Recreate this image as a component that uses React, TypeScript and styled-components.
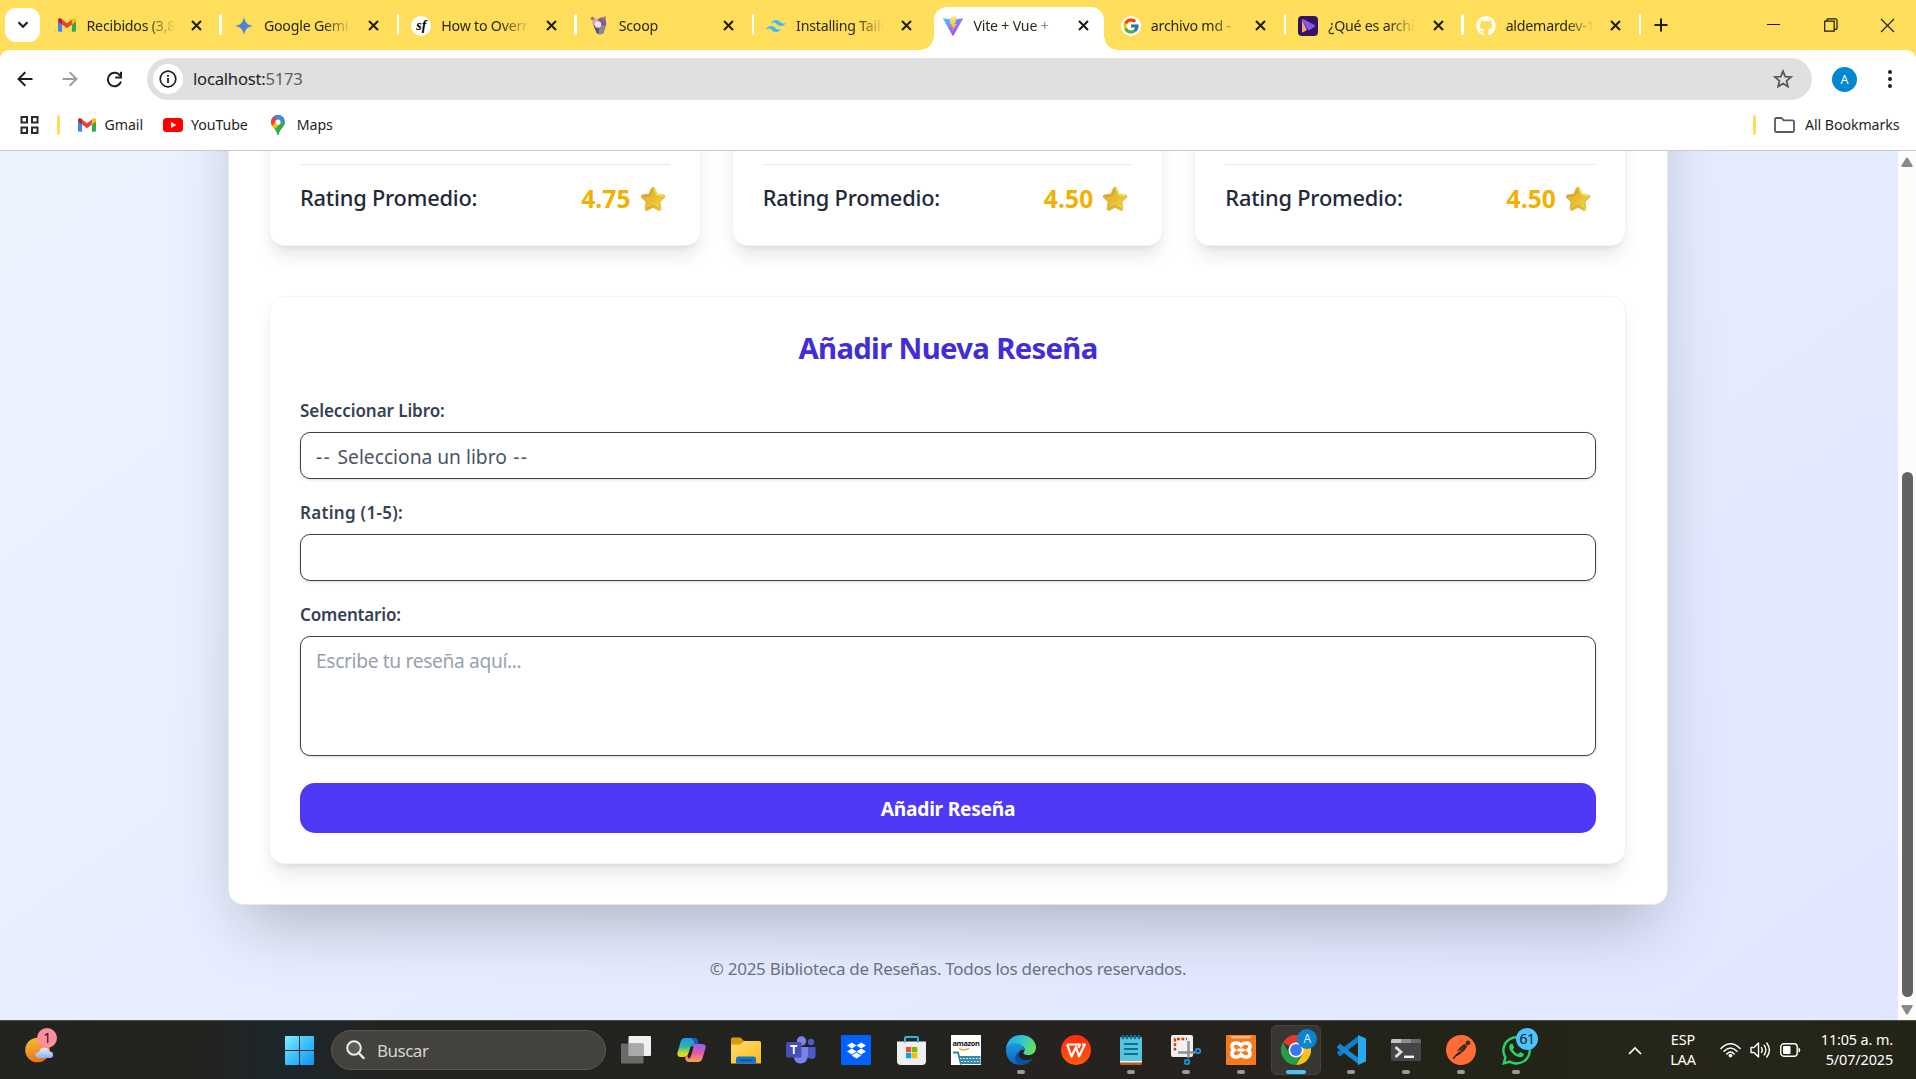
import React from "react";
import styled, { createGlobalStyle, css } from "styled-components";
import { FaGithub, FaWhatsapp, FaDropbox } from "react-icons/fa";
import { FcGoogle } from "react-icons/fc";
import { SiPostman, SiTailwindcss } from "react-icons/si";

const GlobalStyle = createGlobalStyle`
  *, *::before, *::after { box-sizing: border-box; }
  html, body { margin: 0; padding: 0; overflow: hidden; }
  body { font-family: "Noto Sans", "Open Sans", sans-serif; color: #1f1f1f; }
  svg { display: block; flex: none; }
`;

const Screen = styled.div`
  width: 1916px;
  height: 1079px;
  display: flex;
  flex-direction: column;
  overflow: hidden;
  background: #ffde5c;
`;

/* ---------- Tab strip ---------- */

const TabStrip = styled.div`
  height: 50px;
  flex: none;
  display: flex;
  align-items: flex-start;
  background: #ffde5c;
`;

const TabSearch = styled.div`
  width: 35px;
  height: 34px;
  margin: 8px 3.5px 0 5px;
  border-radius: 11px;
  background: #fff;
  display: flex;
  align-items: center;
  justify-content: center;
`;

const TabCell = styled.div<{ $active?: boolean; $divided?: boolean }>`
  position: relative;
  width: 177.4px;
  height: 50px;
  flex: none;
  padding: 0 16px 0 13px;
  display: flex;
  align-items: center;
  ${(p) =>
    p.$divided &&
    css`
      &::after {
        content: "";
        position: absolute;
        right: -1px;
        top: 14px;
        width: 2.5px;
        height: 21px;
        border-radius: 2px;
        background: #fff;
      }
    `}
  ${(p) =>
    p.$active &&
    css`
      &::before {
        content: "";
        position: absolute;
        z-index: 0;
        left: 4px;
        right: 4px;
        top: 7px;
        bottom: 0;
        border-radius: 13px 13px 0 0;
        background: #fff;
      }
    `}
`;

const TabFoot = styled.i<{ $side: "left" | "right" }>`
  position: absolute;
  bottom: 0;
  ${(p) => p.$side}: -10px;
  width: 14px;
  height: 14px;
  background: radial-gradient(
    circle at ${(p) => (p.$side === "left" ? "0 0" : "100% 0")},
    transparent 13.5px,
    #fff 14px
  );
`;

const Favicon = styled.span`
  position: relative;
  z-index: 1;
  width: 20px;
  height: 20px;
  margin-top: 1px;
  display: flex;
  align-items: center;
  justify-content: center;
`;

const FaviconDisc = styled.span`
  width: 20px;
  height: 20px;
  border-radius: 50%;
  background: #fff;
  display: flex;
  align-items: center;
  justify-content: center;
  font: italic 700 14px/20px "Liberation Serif", serif;
  color: #000;
`;

const TabTitle = styled.span`
  position: relative;
  z-index: 1;
  width: 91px;
  margin-left: 10px;
  padding-top: 1px;
  overflow: hidden;
  white-space: nowrap;
  font-size: 14.2px;
  line-height: 22px;
  letter-spacing: -0.22px;
  color: #2b2717;
  mask-image: linear-gradient(90deg, #000 66%, transparent 97%);
`;

const TabClose = styled.span`
  position: relative;
  z-index: 1;
  margin-left: 12px;
  width: 14px;
  display: flex;
  justify-content: center;
`;

const NewTab = styled.div`
  width: 42px;
  height: 50px;
  display: flex;
  align-items: center;
  justify-content: center;
`;

const WindowButtons = styled.div`
  margin-left: auto;
  height: 50px;
  display: flex;
`;

const WindowButton = styled.div`
  width: 57px;
  display: flex;
  align-items: center;
  justify-content: center;
`;

/* ---------- Toolbar and bookmarks ---------- */

const Chrome = styled.div`
  height: 101px;
  flex: none;
  display: flex;
  flex-direction: column;
  background: #fff;
  border-bottom: 1px solid #c9c9c9;
  border-radius: 9px 9px 0 0;
`;

const Toolbar = styled.div`
  height: 58px;
  display: flex;
  align-items: center;
`;

const NavButton = styled.div`
  width: 45px;
  display: flex;
  justify-content: center;
`;

const NavGroup = styled.div`
  display: flex;
  width: 147px;
  padding-left: 2px;
`;

const Omnibox = styled.div`
  width: 1665px;
  height: 42px;
  border-radius: 21px;
  background: #e0e0e0;
  display: flex;
  align-items: center;
  padding: 0 19.5px 0 6px;
`;

const InfoDisc = styled.div`
  width: 30px;
  height: 30px;
  border-radius: 50%;
  background: #fff;
  display: flex;
  align-items: center;
  justify-content: center;
`;

const Url = styled.div`
  flex: 1;
  margin-left: 10px;
  font-size: 16.7px;
  line-height: 24px;
  letter-spacing: -0.25px;
  color: #1f1f1f;
  span { color: #5f5f5f; }
`;

const Avatar = styled.div`
  width: 25px;
  height: 25px;
  margin: 0 25px 0 20px;
  border-radius: 50%;
  background: #0288d1;
  color: #fff;
  font-size: 12.5px;
  line-height: 25px;
  text-align: center;
`;

const Bookmarks = styled.div`
  height: 42px;
  display: flex;
  align-items: center;
  padding: 0 16.5px 8px 20px;
`;

const BookmarkRule = styled.div`
  width: 3px;
  height: 20px;
  margin: 0 18px;
  border-radius: 2px;
  background: #ffde5c;
`;

const Bookmark = styled.div<{ $gap: number; $after: number }>`
  display: flex;
  align-items: center;
  gap: ${(p) => p.$gap}px;
  margin-right: ${(p) => p.$after}px;
  font-size: 14.2px;
  line-height: 20px;
  letter-spacing: -0.08px;
  white-space: nowrap;
`;

const Spacer = styled.div`
  flex: 1;
`;

/* ---------- Page ---------- */

const Viewport = styled.div`
  height: 869px;
  flex: none;
  display: flex;
  overflow: hidden;
`;

const Page = styled.main`
  width: 1898px;
  height: 869px;
  overflow: hidden;
  display: flex;
  flex-direction: column;
  background: linear-gradient(to bottom right, #eff6ff, #e0e7ff) 0 100% / 100% 1388px no-repeat;
`;

const Sheet = styled.section`
  width: 1440px;
  height: 954px;
  flex: none;
  margin: -200px 0 0 228px;
  padding: 40px 41px 40px 40px;
  border: 1px solid #e5e7eb;
  border-radius: 15px;
  background: #fff;
  box-shadow: 0 31px 62px -15px rgba(0, 0, 0, 0.25);
`;

const cardShadow = css`
  border: 1px solid #f3f4f6;
  border-radius: 15px;
  background: #fff;
  box-shadow: 0 12.5px 19px -4px rgba(0, 0, 0, 0.1), 0 5px 7.5px -5px rgba(0, 0, 0, 0.1);
`;

const CardGrid = styled.div`
  display: grid;
  grid-template-columns: repeat(3, 1fr);
  gap: 31px;
`;

const BookCard = styled.article`
  ${cardShadow}
  height: 254px;
  padding: 0 30px 30px 30px;
  display: flex;
  flex-direction: column;
  justify-content: flex-end;
`;

const RatingRow = styled.div`
  height: 51px;
  border-top: 1px solid #e5e7eb;
  padding-top: 20px;
  display: flex;
  align-items: center;
  justify-content: space-between;
`;

const RatingLabel = styled.span`
  padding-bottom: 4px;
  font-size: 21.8px;
  line-height: 30px;
  font-weight: 500;
  letter-spacing: -0.2px;
  color: #1e2939;
`;

const RatingValue = styled.span`
  padding: 0 4px 2px 0;
  display: flex;
  align-items: center;
  gap: 9px;
  font-size: 24.6px;
  line-height: 30px;
  font-weight: 700;
  letter-spacing: 0.1px;
  color: #f0b100;
`;

const FormCard = styled.section`
  ${cardShadow}
  height: 568px;
  margin-top: 50px;
  padding: 30px 29px 30px 30px;
  display: flex;
  flex-direction: column;
`;

const FormTitle = styled.h2`
  margin: 0;
  height: 71px;
  padding-top: 2px;
  text-align: center;
  font-size: 29.3px;
  line-height: 38px;
  font-weight: 700;
  letter-spacing: -0.68px;
  color: #432dd7;
`;

const Field = styled.label`
  display: flex;
  flex-direction: column;
  margin-bottom: 20px;
`;

const FieldLabel = styled.span<{ $track: number }>`
  height: 35px;
  padding-top: 1px;
  font-size: 17px;
  line-height: 26px;
  font-weight: 600;
  letter-spacing: ${(p) => p.$track}px;
  color: #364153;
`;

const Control = styled.span<{ $tall?: boolean; $muted?: boolean }>`
  height: ${(p) => (p.$tall ? 120 : 47)}px;
  padding: 9px 15px;
  border: 1px solid #364153;
  border-radius: 10px;
  background: #fff;
  box-shadow: 0 1px 3px rgba(0, 0, 0, 0.14);
  font-size: 19.2px;
  line-height: 30px;
  letter-spacing: ${(p) => (p.$muted ? -0.35 : 0)}px;
  color: ${(p) => (p.$muted ? "#99a1af" : "#4a5565")};
`;

const Dashes = styled.span`
  letter-spacing: 1.4px;
`;

const Submit = styled.button`
  height: 50px;
  margin-top: 7px;
  padding: 1px 0 0;
  border: 0;
  border-radius: 15px;
  background: #4f39f6;
  color: #fff;
  font: 700 19.2px/30px "Noto Sans", "Open Sans", sans-serif;
  letter-spacing: -0.27px;
`;

const PageFooter = styled.footer`
  padding: 51px 2px 0 0;
  text-align: center;
  font-size: 17px;
  line-height: 26px;
  letter-spacing: -0.29px;
  color: #6a7282;
`;

const Scrollbar = styled.div`
  width: 18px;
  height: 869px;
  padding: 6px 0 5px;
  background: #fcfcfc;
  display: flex;
  flex-direction: column;
  align-items: center;
`;

const Thumb = styled.div`
  width: 11px;
  height: 525px;
  margin: auto 0 8px;
  border-radius: 6px;
  background: #636363;
`;

/* ---------- Taskbar ---------- */

const Taskbar = styled.div`
  height: 59px;
  flex: none;
  display: flex;
  align-items: center;
  border-top: 1px solid #4b4e49;
  background: linear-gradient(
    90deg, #22241f 0%, #23231f 10%, #1c262b 15%, #1f2526 17%, #23221f 21%,
    #22231f 45%, #26221f 56%, #25221d 66%, #222417 76%, #262519 88%, #232517 100%
  );
  color: #fff;
`;

const Weather = styled.div`
  position: relative;
  width: 36px;
  height: 40px;
  margin: 0 224px 0 24px;
`;

const CountBadge = styled.span<{ $x: number; $y: number; $size: number; $bg: string; $fg: string; $font: number }>`
  position: absolute;
  left: ${(p) => p.$x}px;
  top: ${(p) => p.$y}px;
  width: ${(p) => p.$size}px;
  height: ${(p) => p.$size}px;
  border-radius: 50%;
  background: ${(p) => p.$bg};
  color: ${(p) => p.$fg};
  font-size: ${(p) => p.$font}px;
  line-height: ${(p) => p.$size - 1}px;
  letter-spacing: -0.5px;
  text-align: center;
`;

const SearchPill = styled.div`
  width: 275px;
  height: 40px;
  margin: 0 2.5px 0 16px;
  padding: 0 14px;
  border: 1px solid #595856;
  border-radius: 20px;
  background: #43423f;
  display: flex;
  align-items: center;
  gap: 12px;
  font-size: 17px;
  letter-spacing: -0.5px;
  color: #d4d4d2;
`;

const StartButton = styled.div`
  width: 31px;
  display: flex;
  justify-content: center;
`;

const TaskCell = styled.div<{ $focused?: boolean }>`
  position: relative;
  width: 50px;
  height: 50px;
  margin: 0 2.5px;
  flex: none;
  display: flex;
  align-items: center;
  justify-content: center;
  border-radius: 6px;
  ${(p) =>
    p.$focused &&
    css`
      background: #373633;
      border: 1px solid #454340;
    `}
`;

const RunMark = styled.i<{ $focused?: boolean }>`
  position: absolute;
  bottom: ${(p) => (p.$focused ? 0 : 1)}px;
  left: 50%;
  width: ${(p) => (p.$focused ? 20 : 8)}px;
  height: 4px;
  transform: translateX(-50%);
  border-radius: 2px;
  background: ${(p) => (p.$focused ? "#4cc2ff" : "#9a9a98")};
`;

const AppTile = styled.span<{ $bg: string; $round?: boolean }>`
  width: 30px;
  height: 30px;
  border-radius: ${(p) => (p.$round ? "50%" : "1px")};
  background: ${(p) => p.$bg};
  display: flex;
  align-items: center;
  justify-content: center;
`;

const AmazonTile = styled.span`
  width: 30px;
  height: 30px;
  background: #fff;
  display: flex;
  flex-direction: column;
  align-items: center;
  font: 700 7.4px/9px "Open Sans", sans-serif;
  letter-spacing: -0.35px;
  color: #111;
  padding-top: 4px;
`;

const Tray = styled.div`
  margin-left: auto;
  display: flex;
  align-items: center;
  padding-right: 23px;
`;

const TrayText = styled.div<{ $align: string; $width: number; $left: number; $track: number }>`
  width: ${(p) => p.$width}px;
  margin-left: ${(p) => p.$left}px;
  text-align: ${(p) => p.$align};
  font-size: 14.4px;
  line-height: 20px;
  letter-spacing: ${(p) => p.$track}px;
  white-space: nowrap;
`;

const TrayIcons = styled.div`
  margin-left: 22px;
  display: flex;
  align-items: center;
  gap: 9px;
`;

/* ---------- Drawings ---------- */

const GmailIcon = ({ size = 18 }: { size?: number }) => (
  <svg width={size} height={size * 0.78} viewBox="0 0 24 18">
    <path d="M0 2.6V16.4Q0 18 1.6 18H5.5V8.2z" fill="#4285f4" />
    <path d="M18.5 18H22.4Q24 18 24 16.4V2.6L18.5 8.2z" fill="#34a853" />
    <path d="M18.5 1.6V8.4L24 4.3V2.4C24 .1 21.4-.7 19.8.6z" fill="#fbbc04" />
    <path d="M5.5 8.4V1.6L12 6.5l6.5-4.9v6.8L12 13.2z" fill="#ea4335" />
    <path d="M0 2.4v1.9l5.5 4.1V1.6L4.2.6C2.6-.7 0 .1 0 2.4z" fill="#c5221f" />
  </svg>
);

const GeminiIcon = () => (
  <svg width="18" height="20" viewBox="0 0 20 20">
    <defs>
      <linearGradient id="gem" x1="0" y1="0" x2="1" y2="0">
        <stop offset="0" stopColor="#4a8fd8" />
        <stop offset=".5" stopColor="#4f7fd6" />
        <stop offset="1" stopColor="#28a0f0" />
      </linearGradient>
    </defs>
    <path d="M10 0C11 6 14 9 20 10 14 11 11 14 10 20 9 14 6 11 0 10 6 9 9 6 10 0z" fill="url(#gem)" />
  </svg>
);

const ScoopIcon = () => (
  <svg width="18" height="19" viewBox="0 0 18 19">
    <path d="M2.5 7H16.500L13.500 17q-3.500 2.500-7 0z" fill="#5b5867" />
    <path d="M9 9h7l-3 8q-2 1.500-4 1z" fill="#8c8798" />
    <circle cx="6" cy="6" r="3.800" fill="#dba5b4" />
    <circle cx="12" cy="5.500" r="4" fill="#84579f" />
    <circle cx="8" cy="8.500" r="3.200" fill="#eee0e6" />
    <circle cx="2.500" cy="2.500" r="1.800" fill="#a3707a" />
    <path d="M12 2l3-2 1 2-2 3z" fill="#a77a5a" />
  </svg>
);

const ViteIcon = () => (
  <svg width="20" height="20" viewBox="0 0 20 20">
    <defs>
      <linearGradient id="vt" x1="0" y1="0" x2=".7" y2="1">
        <stop offset="0" stopColor="#41d1ff" />
        <stop offset="1" stopColor="#bd34fe" />
      </linearGradient>
      <linearGradient id="vb" x1="0" y1="0" x2="0" y2="1">
        <stop offset="0" stopColor="#ffea83" />
        <stop offset="1" stopColor="#ffa800" />
      </linearGradient>
    </defs>
    <path d="M.3 2.200 10 3.800l9.700-1.600q.5.100.2.700L10.400 19.700q-.4.500-.8 0L.1 2.900q-.2-.6.2-.7z" fill="url(#vt)" />
    <path d="M14 .200 7.300 1.500 6.900 8.500l2-.4-.6 3 1.700-.4-1 4.500L14 7.900l-2.200.4L14 .200z" fill="url(#vb)" />
  </svg>
);

const PlayTileIcon = () => (
  <svg width="20" height="20" viewBox="0 0 20 20">
    <rect width="20" height="20" rx="4" fill="#34145f" />
    <path d="M4 4q0-1.500 1.500-.8L16.500 9q1.500 1 0 2l-6 3.500z" fill="#8a55f5" />
    <path d="M4 4v11.500q.2 1.300 1.500.6l3.500-2.200z" fill="#f4a76a" />
  </svg>
);

const CloseIcon = ({ size = 9, stroke = 2, color = "#1f1c10" }: { size?: number; stroke?: number; color?: string }) => (
  <svg width={size + 2} height={size + 2} viewBox={`-1 -1 ${size + 2} ${size + 2}`}>
    <path d={`M0 0L${size} ${size}M${size} 0L0 ${size}`} stroke={color} strokeWidth={stroke} fill="none" />
  </svg>
);

const ArrowIcon = ({ flip, color }: { flip?: boolean; color: string }) => (
  <svg width="16" height="16" viewBox="0 0 16 16" transform={flip ? "scale(-1,1)" : undefined}>
    <path d="M15.500 8H2M8.300 1.200 1.500 8l6.800 6.800" fill="none" stroke={color} strokeWidth="2" />
  </svg>
);

const ReloadIcon = () => (
  <svg width="17" height="17" viewBox="0 0 17 17">
    <path d="M14.300 5A6.700 6.700 0 1 0 15 10.500" fill="none" stroke="#1f1f1f" strokeWidth="2" />
    <path d="M15 .8V6.500H9.300" fill="none" stroke="#1f1f1f" strokeWidth="2" />
  </svg>
);

const InfoIcon = () => (
  <svg width="18" height="18" viewBox="0 0 18 18">
    <circle cx="9" cy="9" r="7.800" fill="none" stroke="#1f1f1f" strokeWidth="1.700" />
    <path d="M9 8v5M9 5v1.800" stroke="#1f1f1f" strokeWidth="1.800" />
  </svg>
);

const StarOutline = () => (
  <svg width="20" height="20" viewBox="0 0 20 20">
    <path d="M10 2.200 12.200 7.600 18 8.100 13.600 11.900 14.900 17.600 10 14.600 5.100 17.600 6.400 11.900 2 8.100 7.800 7.600z" fill="none" stroke="#5a5a5a" strokeWidth="1.800" />
  </svg>
);

const AppsIcon = () => (
  <svg width="19" height="18" viewBox="0 0 19 18">
    <path d="M1.500 1h5.500v5.500H1.500zM12 1h5.500v5.500H12zM1.500 11.500h5.500V17H1.500zM12 11.500h5.500V17H12z" fill="none" stroke="#2b2b2b" strokeWidth="2" />
  </svg>
);

const YouTubeIcon = () => (
  <svg width="20" height="14" viewBox="0 0 20 14">
    <rect width="20" height="14" rx="3.500" fill="#f00" />
    <path d="M8 4v6l5.200-3z" fill="#fff" />
  </svg>
);

const MapsIcon = () => (
  <svg width="14" height="20" viewBox="0 0 14 20">
    <defs>
      <clipPath id="pin">
        <path d="M7 0a7 7 0 0 1 7 7c0 5-5.200 6.500-6.200 12.400q-.8 1.200-1.600 0C5.200 13.500 0 12 0 7a7 7 0 0 1 7-7z" />
      </clipPath>
    </defs>
    <g clipPath="url(#pin)">
      <path d="M0 0h14v20H0z" fill="#34a853" />
      <path d="M0 9 8 5 10 8 3 15 0 13z" fill="#fbbc04" />
      <path d="M0 0h5L7 5 1.500 10.500H0z" fill="#ea4335" />
      <path d="M2.500 1 6.500 5.500 10 8 14 3V0H3z" fill="#4285f4" />
    </g>
    <circle cx="7" cy="7" r="2.600" fill="#fff" />
  </svg>
);

const FolderIcon = () => (
  <svg width="21" height="16" viewBox="0 0 21 16">
    <path d="M1 13.500V2.500Q1 1 2.500 1H7.500L9.700 3.300H18.500Q20 3.300 20 4.800V13.500Q20 15 18.500 15H2.500Q1 15 1 13.500z" fill="none" stroke="#5a5a5a" strokeWidth="1.800" />
  </svg>
);

const GoldStar = () => (
  <svg width="26" height="26" viewBox="0 0 26 26">
    <defs>
      <linearGradient id="gs" x1="0" y1="0" x2="1" y2="1">
        <stop offset="0" stopColor="#d9ac2d" />
        <stop offset=".5" stopColor="#e9bd33" />
        <stop offset="1" stopColor="#f2dc3a" />
      </linearGradient>
    </defs>
    <path
      d="M11.400 2.200Q13 .2 14.600 2.200L17.100 8 23.600 8.900Q25.900 9.800 24.300 11.700L19.900 15.800 20.900 22.800Q20.500 25.200 18.400 24.300L13 21.300 7.600 24.300Q5.300 25 5.100 22.800L6.100 15.800 1.700 11.700Q.1 9.700 2.400 8.900L8.900 8z"
      fill="url(#gs)"
      stroke="#cfa136"
      strokeWidth=".7"
    />
    <path d="M13 3.500 10 9.500 3.500 10.500M19 22.800 13 19.600 7 22.800" fill="none" stroke="#b98a22" strokeWidth="1" opacity=".6" />
    <path d="M14 2.500 17 8.700 23.500 9.700" fill="none" stroke="#f8ec55" strokeWidth="1.200" />
  </svg>
);

const WeatherIcon = () => (
  <svg width="30" height="26" viewBox="0 0 30 26">
    <defs>
      <linearGradient id="sun" x1=".3" y1="0" x2=".6" y2="1">
        <stop offset="0" stopColor="#f5bd2c" />
        <stop offset="1" stopColor="#ef6c1c" />
      </linearGradient>
      <linearGradient id="cld" x1="0" y1="0" x2="0" y2="1">
        <stop offset="0" stopColor="#e4efff" />
        <stop offset="1" stopColor="#8fb2f2" />
      </linearGradient>
    </defs>
    <circle cx="13.500" cy="13" r="12.300" fill="url(#sun)" />
    <path d="M15 21q-3.500 0-3.500-3t3.500-3q1.500-5 6-4.500 4 .5 4.500 4 3.500 0 3.500 3.200t-3 3.300z" fill="url(#cld)" />
  </svg>
);

const WindowsLogo = () => (
  <svg width="29" height="29" viewBox="0 0 29 29">
    <defs>
      <linearGradient id="win" x1="0" y1="0" x2="29" y2="29" gradientUnits="userSpaceOnUse">
        <stop offset="0" stopColor="#7df0ff" />
        <stop offset=".5" stopColor="#3cc0fb" />
        <stop offset="1" stopColor="#0c93f5" />
      </linearGradient>
    </defs>
    <path d="M1 0h13v14H0V1q0-1 1-1zM15 0h13q1 0 1 1v13H15zM0 15h14v14H1q-1 0-1-1zM15 15h14v13q0 1-1 1H15z" fill="url(#win)" />
  </svg>
);

const MagnifierIcon = () => (
  <svg width="19" height="20" viewBox="0 0 19 20">
    <circle cx="8" cy="8" r="6.800" fill="#5c5c5b" stroke="#ececec" strokeWidth="2" />
    <path d="M12.800 13 17.500 18" stroke="#ececec" strokeWidth="2.500" strokeLinecap="round" />
  </svg>
);

const TaskViewIcon = () => (
  <svg width="30" height="28" viewBox="0 0 30 28">
    <rect x="7.500" y="0" width="22.500" height="20" rx="1" fill="#f0f0f0" />
    <rect x="0" y="7.500" width="22.500" height="20" rx="1" fill="#777" opacity=".85" />
    <rect x="7.500" y="7.500" width="15" height="12.500" fill="#aaa" />
  </svg>
);

const CopilotIcon = () => (
  <svg width="29" height="26" viewBox="0 0 29 26">
    <defs>
      <linearGradient id="cpa" x1="0" y1="0" x2="0" y2="1">
        <stop offset="0" stopColor="#2291f0" />
        <stop offset=".45" stopColor="#28b7a8" />
        <stop offset=".8" stopColor="#d9d92c" />
      </linearGradient>
      <linearGradient id="cpb" x1="0" y1="0" x2="0" y2="1">
        <stop offset="0" stopColor="#8a63f5" />
        <stop offset=".5" stopColor="#e85aa6" />
        <stop offset="1" stopColor="#f9a24b" />
      </linearGradient>
    </defs>
    <path d="M8 1h9q3 0 3.800 3l.8 3h-5q-2 0-3 3l-2.500 8Q10 20 7 20H3.500Q-.5 20 .7 15L3.500 5Q4.500 1 8 1z" fill="url(#cpa)" />
    <path d="M21 25h-9q-3 0-3.600-3l-.4-2q2.300 0 3-2L14 10q1-3 3.500-3h8q4 0 2.800 5l-2.800 9q-1 4-4.500 4z" fill="url(#cpb)" />
    <path d="M15 1h2q3 0 3.800 3l.9 3h-4.200q-1-6-4.500-6z" fill="#1b52c9" />
    <path d="M13.800 9.500h3L14 19q-.6 2-2.600 2.500L10.500 19z" fill="#23231f" />
  </svg>
);

const ExplorerIcon = () => (
  <svg width="30" height="27" viewBox="0 0 30 27">
    <defs>
      <linearGradient id="fld" x1="0" y1="0" x2="1" y2="1">
        <stop offset="0" stopColor="#ffdc6b" />
        <stop offset="1" stopColor="#fbb91f" />
      </linearGradient>
    </defs>
    <path d="M0 2Q0 .5 1.500.5H9.500L12.500 3.500V9H0z" fill="#dd9a0b" />
    <path d="M0 7.500H9L13 4H28.500Q30 4 30 5.500V26.500H0z" fill="url(#fld)" />
    <path d="M5 26.500V22Q5 19.500 7.500 19.500H22.500Q25 19.500 25 22V26.500z" fill="#0f78cc" />
    <path d="M8.500 23.300h13" stroke="#0a4a86" strokeWidth="1.300" />
  </svg>
);

const TeamsIcon = () => (
  <svg width="30" height="28" viewBox="0 0 30 28">
    <circle cx="15.500" cy="5" r="4.700" fill="#7b83eb" />
    <circle cx="25" cy="6" r="3.200" fill="#5059c9" />
    <path d="M20 11h9.500v8.500q0 3-3.500 3.500-3.500 0-6-3z" fill="#5059c9" />
    <path d="M9 11h13v9q-1 7.500-7.500 7.500-5 0-6.500-5z" fill="#7b83eb" />
    <rect x="0" y="6" width="15.500" height="15.500" rx="1.500" fill="#464eb8" />
    <path d="M4.300 10h7M7.800 10v8" stroke="#fff" strokeWidth="1.900" />
  </svg>
);

const StoreIcon = () => (
  <svg width="29" height="29" viewBox="0 0 29 29">
    <path d="M0 5.500H29V25Q29 29 25 29H4Q0 29 0 25z" fill="#efefef" />
    <path d="M8 6.500V2Q8 1 9 1H20Q21 1 21 2V6.500" fill="none" stroke="#28b4e8" strokeWidth="2" />
    <path d="M9 11h5.300v5.300H9z" fill="#f25022" />
    <path d="M15 11h5.300v5.300H15z" fill="#7fba00" />
    <path d="M9 17h5.300v5.300H9z" fill="#00a4ef" />
    <path d="M15 17h5.300v5.300H15z" fill="#ffb900" />
  </svg>
);

const CartIcon = () => (
  <svg width="30" height="17" viewBox="0 0 30 17">
    <path d="M8 .5q5 3 10-.3" fill="none" stroke="#f29a1f" strokeWidth="1.300" />
    <path d="M2 4.500H7L10 16.500" fill="none" stroke="#2b83a8" strokeWidth="1.800" />
    <path d="M8 8H29.500V16H10z" fill="#3787ab" />
    <path d="M9 10.500H29M10 13.500H29" stroke="#fff" strokeWidth="1.100" strokeDasharray="1.600 1.600" />
  </svg>
);

const EdgeIcon = () => (
  <svg width="30" height="30" viewBox="0 0 30 30">
    <defs>
      <linearGradient id="eg1" x1="0" y1=".2" x2="1" y2=".5">
        <stop offset="0" stopColor="#22a5e8" />
        <stop offset=".5" stopColor="#33c5d3" />
        <stop offset="1" stopColor="#67e05c" />
      </linearGradient>
      <linearGradient id="eg2" x1="0" y1="0" x2="0" y2="1">
        <stop offset="0" stopColor="#1f9be2" />
        <stop offset="1" stopColor="#0d63b8" />
      </linearGradient>
    </defs>
    <path d="M0 14C1 5 7 0 15 0c9 0 15 6 15 12.500 0 5-3.500 7.500-7.500 7.500-3.500 0-5.500-1-5-2.500 1.500-2 1.500-3.500.5-5C15 9 6 7.500 0 14z" fill="url(#eg1)" />
    <path d="M0 14.500C1.500 8.500 8 7 12 8.500c4.500 1.500 6.500 4 5.700 6.500-2-1-4.500.5-5.200 3.500-.7 4 2 9.500 9.500 8.500C14 33-.5 29 0 14.500z" fill="url(#eg2)" />
    <path d="M12.300 17c-1 6 5 10.500 14.500 6.500C24 28 19 30 15 30c-6-1-8-8-2.700-13z" fill="#0c4f9e" />
  </svg>
);

const WpsIcon = () => (
  <svg width="20" height="15" viewBox="0 0 20 15">
    <path d="M1.200 1.500H14L12.500 5M1.200 1.500 5.500 13.500 10 4l3 9.500L18.800 1.500H16" fill="none" stroke="#fff" strokeWidth="2.200" strokeLinejoin="round" />
  </svg>
);

const NotepadIcon = () => (
  <svg width="22" height="30" viewBox="0 0 22 30">
    <rect x="0" y="26" width="22" height="4" rx="1" fill="#b3621b" />
    <rect x="0" y="3" width="22" height="24.500" rx="1" fill="#f2f2f2" />
    <rect x="0" y="2" width="22" height="24" rx="1" fill="#58c3dd" />
    <path d="M3 0v3M7 0v3M11 0v3M15 0v3M19 0v3" stroke="#0f6f8f" strokeWidth="2.600" strokeLinecap="round" />
    <path d="M4 9h14M4 14h14M4 19h14" stroke="#0f6f8f" strokeWidth="1.800" />
  </svg>
);

const SnipIcon = () => (
  <svg width="30" height="30" viewBox="0 0 30 30">
    <rect width="22" height="22" rx="2" fill="#f0f0f0" />
    <path d="M4 15.500V4h12" fill="none" stroke="#d83b01" strokeWidth="2.400" strokeDasharray="2.800 1.700" />
    <path d="M17.500 6v17M7 17.500h17" stroke="#8d9096" strokeWidth="2.500" />
    <g fill="none" stroke="#1a8fd6" strokeWidth="1.900">
      <circle cx="16" cy="27" r="2.300" />
      <circle cx="27" cy="16" r="2.300" />
    </g>
  </svg>
);

const XamppIcon = () => (
  <svg width="30" height="30" viewBox="0 0 30 30">
    <path d="M4 1H26L24 3.500H6z" fill="#fbb47c" />
    <path
      d="M10 8Q6 8 6 11.500 6 13.500 8 15 6 16.500 6 18.500 6 22 10 22 13 22 15 19.500 17 22 20 22 24 22 24 18.500 24 16.500 22 15 24 13.500 24 11.500 24 8 20 8 17 8 15 10.500 13 8 10 8z"
      fill="#f47a20"
      stroke="#fff"
      strokeWidth="3.600"
    />
    <path d="M12.500 15h5" stroke="#fff" strokeWidth="3" strokeLinecap="round" />
  </svg>
);

const ChromeIcon = () => (
  <svg width="30" height="30" viewBox="0 0 30 30">
    <path d="M15 15 2 7.500A15 15 0 0 1 28 7.500H15z" fill="#e33b2e" />
    <path d="M15 15V7.500H28A15 15 0 0 1 15 30l6.500-11z" fill="#fbc116" />
    <path d="M15 15l6.500 3.800L15 30A15 15 0 0 1 2 7.500l6.500 11.300z" fill="#2c9b46" />
    <circle cx="15" cy="15" r="7.500" fill="#fff" />
    <circle cx="15" cy="15" r="5.900" fill="#3b78e7" />
  </svg>
);

const CodeIcon = () => (
  <svg width="30" height="30" viewBox="0 0 30 30">
    <path d="M2.200 19.500 23 3.500" stroke="#0f7fcb" strokeWidth="4.800" strokeLinejoin="round" />
    <path d="M2.200 10.500 23 26.500" stroke="#1389d6" strokeWidth="4.800" strokeLinejoin="round" />
    <path d="M22 0 30 3.500V26.500L22 30z" fill="#2aa8f0" />
  </svg>
);

const TerminalIcon = () => (
  <svg width="30" height="22" viewBox="0 0 30 22">
    <rect width="30" height="22" rx="1.500" fill="#444648" />
    <path d="M0 4V1.500Q0 0 1.500 0H10V4z" fill="#c4c4c4" />
    <path d="M10 0H20V4H10z" fill="#8d8d8d" />
    <path d="M20 0H28.500Q30 0 30 1.500V4H20z" fill="#6a6a6a" />
    <path d="M4.500 8 10 13 4.500 18" fill="none" stroke="#dedede" strokeWidth="2.800" />
    <path d="M13 17.800h10" stroke="#f5f5f5" strokeWidth="2.400" />
  </svg>
);

const ChevronUp = () => (
  <svg width="14" height="9" viewBox="0 0 14 9">
    <path d="M1 8 7 2l6 6" fill="none" stroke="#fff" strokeWidth="1.700" />
  </svg>
);

const WifiIcon = () => (
  <svg width="21" height="16" viewBox="0 0 21 16">
    <g fill="none" stroke="#fff" strokeWidth="1.500" strokeLinecap="round">
      <path d="M1 6.500Q10.500-3 20 6.500M4 9.300Q10.500 2.600 17 9.300M6.800 12Q10.500 8.200 14.200 12" />
    </g>
    <circle cx="10.500" cy="13.600" r="1.900" fill="#fff" />
  </svg>
);

const SpeakerIcon = () => (
  <svg width="21" height="18" viewBox="0 0 21 18">
    <g fill="none" stroke="#fff" strokeWidth="1.400" strokeLinecap="round">
      <path d="M1 6.500H4L8.500 2V16L4 11.500H1z" strokeLinejoin="round" />
      <path d="M11.500 6.500Q13 9 11.500 11.500M14.200 4.200Q17.500 9 14.200 13.800M16.800 2Q22 9 16.800 16" />
    </g>
  </svg>
);

const BatteryIcon = () => (
  <svg width="21" height="14" viewBox="0 0 21 14">
    <rect x=".8" y=".8" width="16.400" height="12.400" rx="3" fill="none" stroke="#fff" strokeWidth="1.400" />
    <rect x="3" y="3" width="7.500" height="8" rx="1" fill="#fff" />
    <path d="M18.500 4.500v5q1.800-.5 1.800-2.500t-1.800-2.500z" fill="#fff" />
  </svg>
);

const ScrollArrow = ({ down }: { down?: boolean }) => (
  <svg width="12" height="10" viewBox="0 0 12 10">
    <path d={down ? "M1 0h10q1 .5.5 1.500L7 9Q6 10 5 9L.5 1.500Q0 .5 1 0z" : "M1 10h10q1-.5.5-1.500L7 1Q6 0 5 1L.5 8.500Q0 9.500 1 10z"} fill="#8a8a8a" />
  </svg>
);

/* ---------- Data ---------- */

const tabs = [
  { title: "Recibidos (3,8", icon: <GmailIcon />, divided: true },
  { title: "Google Gemi", icon: <GeminiIcon />, divided: true },
  { title: "How to Overr", icon: <FaviconDisc>sf</FaviconDisc>, divided: true },
  { title: "Scoop", icon: <ScoopIcon />, divided: true },
  { title: "Installing Tailw", icon: <SiTailwindcss size={20} color="#38bdf8" /> },
  { title: "Vite + Vue +", icon: <ViteIcon />, active: true },
  { title: "archivo md -", icon: <FaviconDisc><FcGoogle size={18} /></FaviconDisc>, divided: true },
  { title: "¿Qué es archi", icon: <PlayTileIcon />, divided: true },
  { title: "aldemardev-1", icon: <FaGithub size={20} color="#fff" />, divided: true },
];

const ratings = ["4.75", "4.50", "4.50"];

const apps: { icon: React.ReactNode; running?: boolean; focused?: boolean; badge?: React.ReactNode }[] = [
  { icon: <TaskViewIcon /> },
  { icon: <CopilotIcon /> },
  { icon: <ExplorerIcon /> },
  { icon: <TeamsIcon /> },
  { icon: <AppTile $bg="#0061fe"><FaDropbox size={19} color="#fff" /></AppTile> },
  { icon: <StoreIcon /> },
  { icon: <AmazonTile>amazon<CartIcon /></AmazonTile> },
  { icon: <EdgeIcon />, running: true },
  { icon: <AppTile $round $bg="linear-gradient(180deg,#ff2a12,#ff5a0c)"><WpsIcon /></AppTile> },
  { icon: <NotepadIcon />, running: true },
  { icon: <SnipIcon />, running: true },
  { icon: <AppTile $bg="#f47a20"><XamppIcon /></AppTile>, running: true },
  {
    icon: <ChromeIcon />,
    running: true,
    focused: true,
    badge: <CountBadge $x={25} $y={3} $size={20} $bg="#0a84cc" $fg="#d5ecfa" $font={12}>A</CountBadge>,
  },
  { icon: <CodeIcon />, running: true },
  { icon: <TerminalIcon />, running: true },
  { icon: <SiPostman size={30} color="#ff6c37" />, running: true },
  {
    icon: <FaWhatsapp size={33} color="#25d366" />,
    running: true,
    badge: <CountBadge $x={25} $y={3} $size={22} $bg="#4cc2ff" $fg="#0b1a24" $font={14}>61</CountBadge>,
  },
];

export default function App() {
  return (
    <Screen>
      <GlobalStyle />
      <TabStrip>
        <TabSearch>
          <svg width="12" height="8" viewBox="0 0 12 8">
            <path d="M1.500 1.200 6 5.800l4.500-4.600" fill="none" stroke="#1f1f1f" strokeWidth="2.200" />
          </svg>
        </TabSearch>
        {tabs.map((t) => (
          <TabCell key={t.title} $active={t.active} $divided={t.divided}>
            {t.active && <TabFoot $side="left" />}
            {t.active && <TabFoot $side="right" />}
            <Favicon>{t.icon}</Favicon>
            <TabTitle>{t.title}</TabTitle>
            <TabClose><CloseIcon /></TabClose>
          </TabCell>
        ))}
        <NewTab>
          <svg width="14" height="14" viewBox="0 0 14 14">
            <path d="M7 .5v13M.5 7h13" stroke="#1f1c10" strokeWidth="2" />
          </svg>
        </NewTab>
        <WindowButtons>
          <WindowButton>
            <svg width="13" height="3" viewBox="0 0 13 3"><path d="M0 .5h13" stroke="#1c1909" strokeWidth="1" /></svg>
          </WindowButton>
          <WindowButton>
            <svg width="14" height="14" viewBox="0 0 14 14">
              <path d="M.7 3.200H10.200V13.200H.7zM3 3V1.500Q3 .8 3.800.8H11.500Q13 .8 13 2.300V10.500Q13 11.300 12.300 11.300H10.500" fill="none" stroke="#1c1909" strokeWidth="1.200" />
            </svg>
          </WindowButton>
          <WindowButton><CloseIcon size={13} stroke={1.1} /></WindowButton>
        </WindowButtons>
      </TabStrip>

      <Chrome>
        <Toolbar>
          <NavGroup>
            <NavButton><ArrowIcon color="#1f1f1f" /></NavButton>
            <NavButton><ArrowIcon flip color="#9e9e9e" /></NavButton>
            <NavButton><ReloadIcon /></NavButton>
          </NavGroup>
          <Omnibox>
            <InfoDisc><InfoIcon /></InfoDisc>
            <Url>localhost:<span>5173</span></Url>
            <StarOutline />
          </Omnibox>
          <Avatar>A</Avatar>
          <svg width="16" height="20" viewBox="0 0 16 20">
            <path d="M8 3h.01M8 10h.01M8 17h.01" stroke="#1f1f1f" strokeWidth="4" strokeLinecap="round" />
          </svg>
        </Toolbar>
        <Bookmarks>
          <AppsIcon />
          <BookmarkRule />
          <Bookmark $gap={8.5} $after={20}><GmailIcon />Gmail</Bookmark>
          <Bookmark $gap={8} $after={23}><YouTubeIcon />YouTube</Bookmark>
          <Bookmark $gap={12} $after={0}><MapsIcon />Maps</Bookmark>
          <Spacer />
          <BookmarkRule />
          <Bookmark $gap={10} $after={0}><FolderIcon />All Bookmarks</Bookmark>
        </Bookmarks>
      </Chrome>

      <Viewport>
        <Page>
          <Sheet>
            <CardGrid>
              {ratings.map((value, i) => (
                <BookCard key={i}>
                  <RatingRow>
                    <RatingLabel>Rating Promedio:</RatingLabel>
                    <RatingValue>{value}<GoldStar /></RatingValue>
                  </RatingRow>
                </BookCard>
              ))}
            </CardGrid>
            <FormCard>
              <FormTitle>Añadir Nueva Reseña</FormTitle>
              <Field>
                <FieldLabel $track={-0.07}>Seleccionar Libro:</FieldLabel>
                <Control><Dashes>-- </Dashes>Selecciona un libro<Dashes> --</Dashes></Control>
              </Field>
              <Field>
                <FieldLabel $track={0.3}>Rating (1-5):</FieldLabel>
                <Control />
              </Field>
              <Field>
                <FieldLabel $track={-0.17}>Comentario:</FieldLabel>
                <Control $tall $muted>Escribe tu reseña aquí...</Control>
              </Field>
              <Submit>Añadir Reseña</Submit>
            </FormCard>
          </Sheet>
          <PageFooter>© 2025 Biblioteca de Reseñas. Todos los derechos reservados.</PageFooter>
        </Page>
        <Scrollbar>
          <ScrollArrow />
          <Thumb />
          <ScrollArrow down />
        </Scrollbar>
      </Viewport>

      <Taskbar>
        <Weather>
          <svg width="36" height="40" viewBox="0 0 36 40"><g transform="translate(0,7)"><WeatherIcon /></g></svg>
          <CountBadge $x={13} $y={-2} $size={20} $bg="#fc8f9b" $fg="#2a1416" $font={14}>1</CountBadge>
        </Weather>
        <StartButton><WindowsLogo /></StartButton>
        <SearchPill><MagnifierIcon />Buscar</SearchPill>
        {apps.map((a, i) => (
          <TaskCell key={i} $focused={a.focused}>
            {a.icon}
            {a.badge}
            {a.running && <RunMark $focused={a.focused} />}
          </TaskCell>
        ))}
        <Tray>
          <ChevronUp />
          <TrayText $align="center" $width={30} $left={26} $track={-0.1}>ESP<br />LAA</TrayText>
          <TrayIcons><WifiIcon /><SpeakerIcon /><BatteryIcon /></TrayIcons>
          <TrayText $align="right" $width={76} $left={16} $track={-0.12}>11:05 a. m.<br />5/07/2025</TrayText>
        </Tray>
      </Taskbar>
    </Screen>
  );
}
